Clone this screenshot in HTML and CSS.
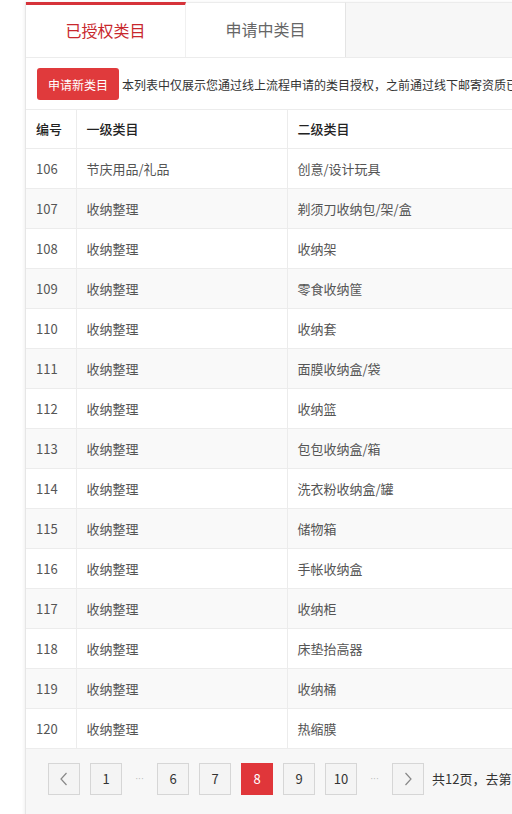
FILE: index.html
```html
<!DOCTYPE html>
<html lang="zh">
<head>
<meta charset="utf-8">
<link rel="stylesheet" href="styles.css">
</head>
<body>
<div class="page">
  <div class="panel">
    <div class="tabs">
      <div class="tab active">已授权类目</div>
      <div class="tab">申请中类目</div>
      <div class="tab-rest"></div>
    </div>
    <div class="toolbar">
      <button class="btn-apply">申请新类目</button>
      <span class="notice">本列表中仅展示您通过线上流程申请的类目授权，之前通过线下邮寄资质已授权的类目请在原页面查看</span>
    </div>
    <table class="grid">
      <thead>
        <tr><th class="c1">编号</th><th class="c2">一级类目</th><th class="c3">二级类目</th></tr>
      </thead>
      <tbody>
        <tr><td>106</td><td>节庆用品/礼品</td><td>创意/设计玩具</td></tr>
        <tr><td>107</td><td>收纳整理</td><td>剃须刀收纳包/架/盒</td></tr>
        <tr><td>108</td><td>收纳整理</td><td>收纳架</td></tr>
        <tr><td>109</td><td>收纳整理</td><td>零食收纳筐</td></tr>
        <tr><td>110</td><td>收纳整理</td><td>收纳套</td></tr>
        <tr><td>111</td><td>收纳整理</td><td>面膜收纳盒/袋</td></tr>
        <tr><td>112</td><td>收纳整理</td><td>收纳篮</td></tr>
        <tr><td>113</td><td>收纳整理</td><td>包包收纳盒/箱</td></tr>
        <tr><td>114</td><td>收纳整理</td><td>洗衣粉收纳盒/罐</td></tr>
        <tr><td>115</td><td>收纳整理</td><td>储物箱</td></tr>
        <tr><td>116</td><td>收纳整理</td><td>手帐收纳盒</td></tr>
        <tr><td>117</td><td>收纳整理</td><td>收纳柜</td></tr>
        <tr><td>118</td><td>收纳整理</td><td>床垫抬高器</td></tr>
        <tr><td>119</td><td>收纳整理</td><td>收纳桶</td></tr>
        <tr><td>120</td><td>收纳整理</td><td>热缩膜</td></tr>
      </tbody>
    </table>
    <div class="pager">
      <a class="pg arrow"><svg width="10" height="14" viewBox="0 0 10 14"><path d="M7.5 1 L2 7 L7.5 13" fill="none" stroke="#888" stroke-width="1.2"/></svg></a>
      <a class="pg">1</a>
      <span class="dots">···</span>
      <a class="pg">6</a>
      <a class="pg">7</a>
      <a class="pg current">8</a>
      <a class="pg">9</a>
      <a class="pg">10</a>
      <span class="dots">···</span>
      <a class="pg arrow"><svg width="10" height="14" viewBox="0 0 10 14"><path d="M2.5 1 L8 7 L2.5 13" fill="none" stroke="#888" stroke-width="1.2"/></svg></a>
      <span class="total">共12页，去第</span>
      <input class="goto" type="text">
    </div>
  </div>
</div>
</body>
</html>
```
FILE: styles.css
```css
html, body {
  margin: 0;
  padding: 0;
  background: #fff;
  overflow: hidden;
}
body {
  font-family: "Noto Sans CJK SC", "Microsoft YaHei", sans-serif;
  color: #333;
}
.page {
  padding: 2px 0 0 25px;
  width: 760px;
}
.panel {
  border-left: 1px solid #e6e6e6;
  box-shadow: -1px 0 3px rgba(0,0,0,0.06);
  background: #fff;
}
.tabs {
  display: flex;
  height: 55px;
  border-bottom: 1px solid #ececec;
  background: #f7f7f7;
}
.tab {
  width: 160px;
  box-sizing: border-box;
  display: flex;
  align-items: center;
  justify-content: center;
  font-size: 16px;
  color: #666;
  background: #fff;
  border-top: 1px solid #ececec;
  border-right: 1px solid #e4e4e4;
  padding-bottom: 2px;
}
.tab.active {
  color: #c8282d;
  border-top: 3px solid #d6333a;
  border-right: 1px solid #f0f0f0;
}
.tab-rest {
  flex: 1;
  border-top: 1px solid #ececec;
}
.toolbar {
  display: flex;
  align-items: center;
  padding: 10px 11px 9px;
  height: 32px;
  border-bottom: 1px solid #ececec;
  white-space: nowrap;
}
.btn-apply {
  height: 32px;
  padding: 0 11px;
  border: none;
  border-radius: 3px;
  background: #e03a3c;
  color: #fff;
  font-family: inherit;
  font-size: 12px;
  margin-right: 3px;
}
.notice {
  font-size: 12px;
  color: #333;
}
.grid {
  border-collapse: collapse;
  width: 100%;
  font-size: 13px;
}
.grid th, .grid td {
  height: 40px;
  padding: 0 0 0 10px;
  text-align: left;
  border-bottom: 1px solid #ececec;
  border-right: 1px solid #ececec;
  box-sizing: border-box;
}
.grid th {
  height: 38px;
  font-weight: 500;
  color: #222;
}
.grid td {
  color: #555;
}
.grid .c1 { width: 50px; }
.grid .c2 { width: 211px; }
.grid tbody tr:nth-child(even) td {
  background: #f9f9f9;
}
.pager {
  display: flex;
  align-items: center;
  gap: 10px;
  background: #f7f7f7;
  padding: 14px 0 30px 22px;
  white-space: nowrap;
}
.pg {
  width: 32px;
  height: 32px;
  box-sizing: border-box;
  border: 1px solid #d6d6d6;
  background: #f4f4f4;
  display: flex;
  align-items: center;
  justify-content: center;
  font-size: 13px;
  color: #333;
}
.pg.current {
  background: #e0363a;
  border-color: #e0363a;
  color: #fff;
}
.dots {
  width: 15px;
  text-align: center;
  color: #bbb;
  font-family: "DejaVu Sans", sans-serif;
  font-size: 9px;
  letter-spacing: 0;
}
.total {
  font-size: 13px;
  color: #333;
  margin-left: -2px;
}
.goto {
  width: 40px;
  height: 27px;
  box-sizing: border-box;
  border: 1px solid #ccc;
  margin-left: -6px;
  background: #fff;
}
```
